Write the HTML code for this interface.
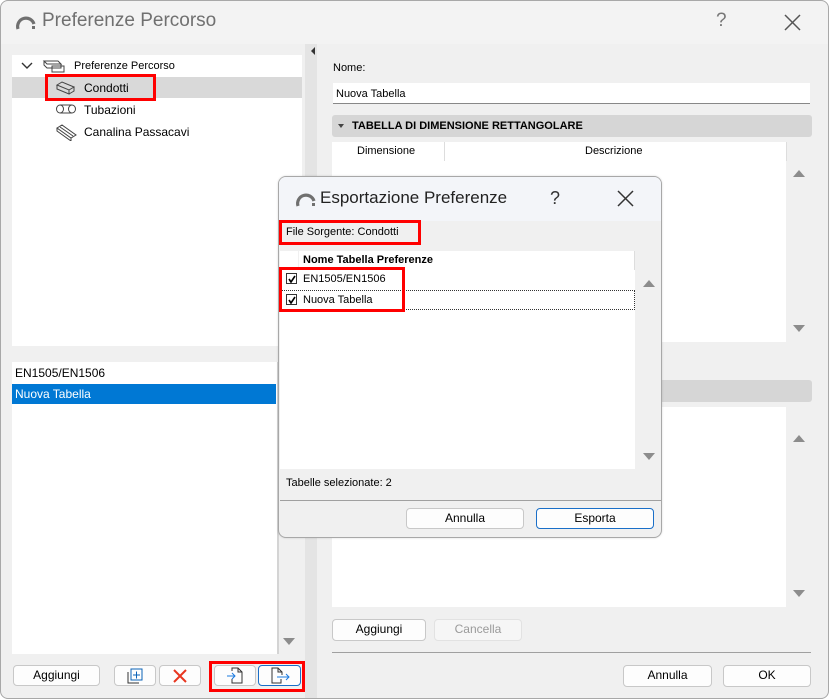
<!DOCTYPE html>
<html><head><meta charset="utf-8"><style>
*{box-sizing:border-box;margin:0;padding:0}
body{width:829px;height:699px;overflow:hidden;background:#fff;font-family:"Liberation Sans",sans-serif;font-size:12px;color:#000;position:relative}
.a{position:absolute}
.win{left:0;top:0;width:829px;height:699px;border-radius:8px;background:#f0f0f0;overflow:hidden}
.white{background:#fff}
.btn{position:absolute;background:#fdfdfd;border:1px solid #c8c8c8;border-radius:4px;text-align:center;font-size:12px;line-height:19px}
.red{position:absolute;border:3px solid #f00}
.tri-up{width:0;height:0;border-left:6px solid transparent;border-right:6px solid transparent;border-bottom:7px solid #8c8c8c;position:absolute}
.tri-dn{width:0;height:0;border-left:6px solid transparent;border-right:6px solid transparent;border-top:7px solid #8c8c8c;position:absolute}
.t{position:absolute;white-space:nowrap}
</style></head><body>
<div class="a win">
 <div class="a" style="left:0;top:0;width:829px;height:44px;background:#f3f3f3"></div>
 <svg class="a" style="left:15px;top:12px" width="22" height="20" viewBox="0 0 22 20"><path d="M3 17 A8 8 0 0 1 19 12" stroke="#707070" stroke-width="3.2" fill="none"/><rect x="17" y="14" width="3" height="3" fill="#707070"/></svg>
 <div class="t" style="left:42px;top:10px;font-size:19px;color:#707070">Preferenze Percorso</div>
 <div class="t" style="left:716px;top:10px;font-size:19px;color:#777">?</div>
 <svg class="a" style="left:784px;top:14px" width="17" height="17"><path d="M1 1L16 16M16 1L1 16" stroke="#555" stroke-width="1.5"/></svg>

 <div class="a white" style="left:12px;top:55px;width:290px;height:291px"></div>
 <div class="a" style="left:12px;top:77px;width:290px;height:21px;background:#d9d9d9"></div>
 <svg class="a" style="left:21px;top:61px" width="12" height="10"><path d="M1 2L6 7L11 2" stroke="#333" stroke-width="1.4" fill="none"/></svg>
 <svg class="a" style="left:42px;top:58px" width="28" height="16"><path d="M2 3h14l3 3H5zM2 3v4l3 3h14V6M10 8h12v6H10z" stroke="#444" fill="none"/></svg>
 <div class="t" style="left:74px;top:60px;font-size:11px">Preferenze Percorso</div>
 <svg class="a" style="left:55px;top:80px" width="22" height="16"><path d="M2 5l5-3 12 5-5 3zM2 5v4l12 5V10M19 7v4l-5 3" stroke="#444" fill="none"/></svg>
 <div class="t" style="left:84px;top:81px">Condotti</div>
 <div class="red" style="left:45px;top:74px;width:111px;height:27px"></div>
 <svg class="a" style="left:55px;top:102px" width="22" height="16"><ellipse cx="5" cy="7" rx="3.5" ry="4" stroke="#444" fill="none"/><path d="M5 3h12M5 11h12" stroke="#444"/><ellipse cx="17" cy="7" rx="3.5" ry="4" stroke="#444" fill="none"/></svg>
 <div class="t" style="left:84px;top:103px">Tubazioni</div>
 <svg class="a" style="left:55px;top:123px" width="22" height="18"><path d="M2 5l5-3 14 10-5 3zM2 5v3l14 10v-3M5 4l13 9" stroke="#444" fill="none"/></svg>
 <div class="t" style="left:84px;top:125px">Canalina Passacavi</div>

 <div class="a white" style="left:12px;top:362px;width:265px;height:292px"></div>
 <div class="a" style="left:277px;top:362px;width:2px;height:292px;background:#d4d4d4"></div>
 <div class="t" style="left:15px;top:366px">EN1505/EN1506</div>
 <div class="a" style="left:12px;top:384px;width:264px;height:20px;background:#0078d4"></div>
 <div class="t" style="left:15px;top:387px;color:#fff">Nuova Tabella</div>
 <div class="tri-dn" style="left:283px;top:638px"></div>

 <div class="a" style="left:305px;top:44px;width:12px;height:655px;background:#e4e4e4"></div>
 <div class="a" style="left:311px;top:47px;width:0;height:0;border-top:4px solid transparent;border-bottom:4px solid transparent;border-right:4px solid #333"></div>

 <div class="btn" style="left:13px;top:665px;width:87px;height:21px">Aggiungi</div>
 <div class="btn" style="left:114px;top:665px;width:42px;height:21px"><svg width="16" height="16" style="margin-top:2px" viewBox="0 0 16 16"><rect x="4" y="1" width="11" height="11" fill="none" stroke="#0a62b8"/><path d="M1 4v11h11" fill="none" stroke="#333"/><path d="M9.5 3.5v7M6 7h7" stroke="#0a62b8"/></svg></div>
 <div class="btn" style="left:159px;top:665px;width:42px;height:21px"><svg width="16" height="16" style="margin-top:2px"><path d="M2 2L14 14M14 2L2 14" stroke="#e8361f" stroke-width="2"/></svg></div>
 <div class="btn" style="left:214px;top:665px;width:42px;height:21px"><svg width="18" height="17" style="margin-top:1px"><path d="M6 4V1h6l4 4v11H6v-4M12 1v4h4" fill="none" stroke="#333"/><path d="M1 9h8M6 6l3 3-3 3" fill="none" stroke="#1a7ae0"/></svg></div>
 <div class="btn" style="left:258px;top:665px;width:43px;height:21px;border-color:#1a6fc8"><svg width="22" height="17" style="margin-top:1px"><path d="M12 12v4H3V1h6l4 4v3M9 1v4h4" fill="none" stroke="#333"/><path d="M8 10h12M17 7l3 3-3 3" fill="none" stroke="#1a7ae0"/></svg></div>
 <div class="red" style="left:209px;top:661px;width:96px;height:31px"></div>

 <div class="t" style="left:333px;top:62px;font-size:11px">Nome:</div>
 <div class="a white" style="left:333px;top:83px;width:477px;height:21px;border-bottom:1px solid #888"></div>
 <div class="t" style="left:336px;top:88px;font-size:11px">Nuova Tabella</div>
 <div class="a" style="left:332px;top:115px;width:480px;height:22px;background:#d6d6d6;border-radius:3px"></div>
 <div class="a" style="left:338px;top:124px;border-left:3.5px solid transparent;border-right:3.5px solid transparent;border-top:4px solid #444"></div>
 <div class="t" style="left:352px;top:120px;font-size:11px;font-weight:bold">TABELLA DI DIMENSIONE RETTANGOLARE</div>
 <div class="a white" style="left:332px;top:142px;width:454px;height:200px"></div>
 <div class="a" style="left:444px;top:142px;width:1px;height:19px;background:#ddd"></div>
 <div class="a" style="left:786px;top:142px;width:1px;height:19px;background:#ddd"></div>
 <div class="t" style="left:357px;top:145px;font-size:11px">Dimensione</div>
 <div class="t" style="left:585px;top:145px;font-size:11px">Descrizione</div>
 <div class="tri-up" style="left:793px;top:170px"></div>
 <div class="tri-dn" style="left:793px;top:325px"></div>
 <div class="a" style="left:332px;top:380px;width:480px;height:22px;background:#d6d6d6;border-radius:3px"></div>
 <div class="a white" style="left:332px;top:407px;width:454px;height:200px"></div>
 <div class="tri-up" style="left:793px;top:435px"></div>
 <div class="tri-dn" style="left:793px;top:590px"></div>
 <div class="btn" style="left:332px;top:619px;width:94px;height:22px">Aggiungi</div>
 <div class="btn" style="left:434px;top:619px;width:88px;height:22px;color:#9a9a9a;background:#f6f6f6;border-color:#e2e2e2">Cancella</div>
 <div class="a" style="left:332px;top:652px;width:479px;height:1px;background:#a0a0a0"></div>
 <div class="btn" style="left:623px;top:665px;width:89px;height:22px">Annulla</div>
 <div class="btn" style="left:723px;top:665px;width:88px;height:22px">OK</div>
</div>
<div class="a" style="left:0;top:0;width:829px;height:699px;border:1px solid #a8a8a8;border-radius:8px"></div>

<div class="a" style="left:278px;top:176px;width:384px;height:362px;border:1px solid #a8a8a8;border-radius:8px;background:#f0f0f0;overflow:hidden;box-shadow:0 0 2px rgba(0,0,0,.15)">
 <div class="a" style="left:0;top:0;width:384px;height:44px;background:#f3f5f9"></div>
 <svg class="a" style="left:16px;top:12px" width="22" height="20" viewBox="0 0 22 20"><path d="M3 17 A8 8 0 0 1 19 12" stroke="#707070" stroke-width="3.2" fill="none"/><rect x="17" y="14" width="3" height="3" fill="#707070"/></svg>
 <div class="t" style="left:41px;top:11px;font-size:17px;color:#222">Esportazione Preferenze</div>
 <div class="t" style="left:271px;top:11px;font-size:18px;color:#333">?</div>
 <svg class="a" style="left:338px;top:13px" width="17" height="17"><path d="M1 1L16 16M16 1L1 16" stroke="#333" stroke-width="1.5"/></svg>
 <div class="t" style="left:7px;top:49px;font-size:11px">File Sorgente: Condotti</div>
 <div class="a white" style="left:1px;top:74px;width:355px;height:218px"></div>
 <div class="a" style="left:355px;top:74px;width:1px;height:19px;background:#ddd"></div>
 <div class="a" style="left:19px;top:74px;width:1px;height:19px;background:#f0f0f0"></div>
 <div class="t" style="left:24px;top:77px;font-size:11px;font-weight:bold">Nome Tabella Preferenze</div>
 <div class="a" style="left:7px;top:96px;width:11px;height:11px;border:1px solid #333"></div>
 <svg class="a" style="left:8px;top:97px" width="10" height="10"><path d="M2 5l2 3 4-6" stroke="#000" stroke-width="1.6" fill="none"/></svg>
 <div class="t" style="left:24px;top:96px;font-size:11px">EN1505/EN1506</div>
 <div class="a" style="left:1px;top:113px;width:355px;height:20px;border:1px dotted #333"></div>
 <div class="a" style="left:7px;top:117px;width:11px;height:11px;border:1px solid #333"></div>
 <svg class="a" style="left:8px;top:118px" width="10" height="10"><path d="M2 5l2 3 4-6" stroke="#000" stroke-width="1.6" fill="none"/></svg>
 <div class="t" style="left:24px;top:117px;font-size:11px">Nuova Tabella</div>
 <div class="tri-up" style="left:364px;top:103px"></div>
 <div class="tri-dn" style="left:364px;top:276px"></div>
 <div class="t" style="left:7px;top:300px;font-size:11px">Tabelle selezionate: 2</div>
 <div class="a" style="left:1px;top:323px;width:381px;height:1px;background:#a0a0a0"></div>
 <div class="btn" style="left:127px;top:331px;width:118px;height:21px">Annulla</div>
 <div class="btn" style="left:257px;top:331px;width:118px;height:21px;border-color:#1a6fc8">Esporta</div>
</div>
<div class="red" style="left:279px;top:220px;width:142px;height:25px"></div>
<div class="red" style="left:279px;top:267px;width:126px;height:45px"></div>
</body></html>
